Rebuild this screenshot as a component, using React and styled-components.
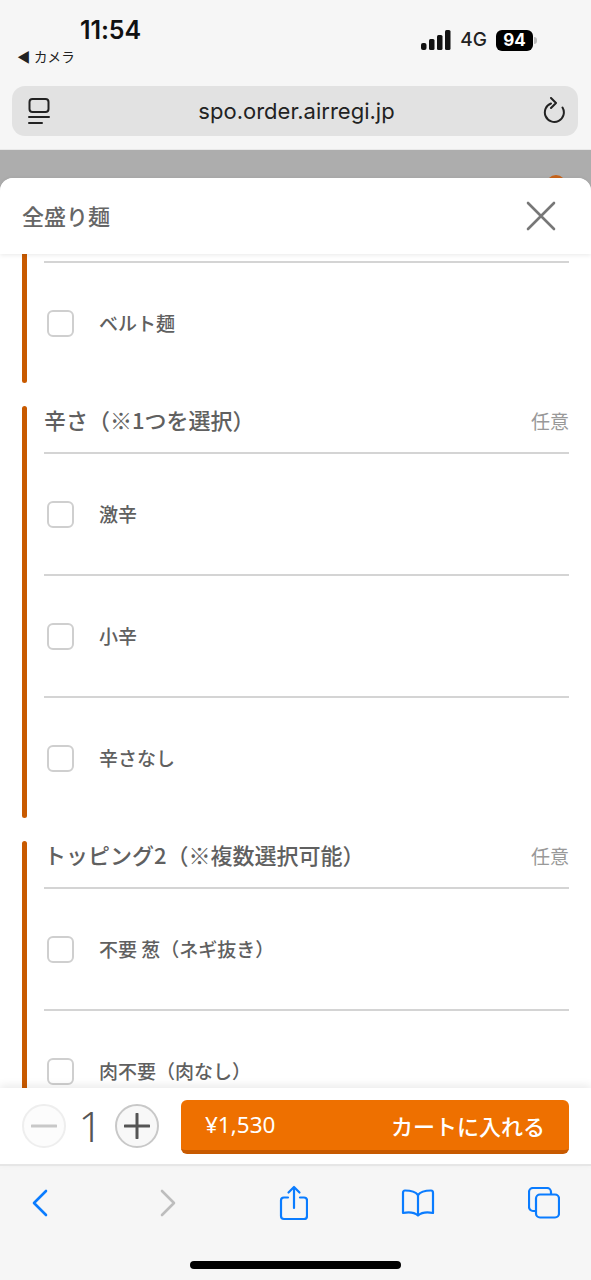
import React from "react";
import styled, { createGlobalStyle } from "styled-components";

const Global = createGlobalStyle`
  html, body { margin: 0; padding: 0; background: #f6f6f6; }
  * { box-sizing: border-box; }
  #root { width: 591px; height: 1280px; overflow: hidden; }
`;
const JP = `"Noto Sans CJK JP", "Noto Sans", sans-serif`;

const Page = styled.div`
  width: 591px; height: 1280px; display: flex; flex-direction: column;
  font-family: ${JP}; color: #555; overflow: hidden;
`;
const Chrome = styled.header`
  height: 150px; flex: none; background: #f6f6f6; border-bottom: 1px solid #e9e9e9;
  padding: 0 13px 0 12px; display: flex; flex-direction: column;
`;
const Status = styled.div`
  height: 86px; flex: none; display: flex; justify-content: space-between; align-items: flex-start;
`;
const StatusLeft = styled.div`
  display: flex; flex-direction: column; padding-left: 5px;
`;
const Time = styled.div`
  font: 600 25px/30px Inter, sans-serif; color: #111; margin: 15px 0 0 63px; letter-spacing: -0.1px;
`;
const Back = styled.div`
  font: 400 13.500px/20px ${JP}; color: #222; margin-top: 1px; letter-spacing: 0.2px;
`;
const StatusRight = styled.div`
  display: flex; align-items: center; margin: 29px 45px 0 0; height: 22px;
`;
const Net = styled.span`
  font: 500 19px/22px Inter, sans-serif; color: #222; margin: 0 9px;
`;
const Battery = styled.span`
  width: 37px; height: 21px; border-radius: 6px; background: #000; color: #fff;
  font: 700 17px/21px Inter, sans-serif; text-align: center; position: relative;
  &::after { content: ""; position: absolute; right: -4px; top: 7px; width: 3px; height: 7px;
    border-radius: 0 3px 3px 0; background: #bbb; }
`;
const Address = styled.div`
  height: 50px; background: #e2e2e2; border-radius: 13px; display: flex; align-items: center;
  justify-content: space-between; padding: 0 13px 0 16px;
`;
const Url = styled.div`
  font: 400 22px/28px Inter, sans-serif; color: #222;
`;
const Overlay = styled.div`
  flex: 1; min-height: 0; background: #adadad; padding-top: 28px; position: relative;
  display: flex; flex-direction: column;
`;
const Peek = styled.span`
  position: absolute; left: 546px; top: 25px; width: 20px; height: 20px; border-radius: 50%;
  background: #c8641a;
`;
const Modal = styled.main`
  flex: 1; min-height: 0; background: #fff; border-radius: 13px 13px 0 0; position: relative;
  display: flex; flex-direction: column;
`;
const ModalHead = styled.div`
  height: 76px; flex: none; display: flex; align-items: center; justify-content: space-between;
  padding: 0 35px 0 22px; background: #fff; border-radius: 13px 13px 0 0;
  box-shadow: 0 1px 5px rgba(0,0,0,.09); position: relative; z-index: 2;
`;
const ModalTitle = styled.h1`
  margin: 0 0 3px; font: 500 22px/28px ${JP}; color: #666;
`;
const Scroll = styled.div`
  flex: 1; min-height: 0; overflow: hidden; padding: 0 22px;
  display: flex; flex-direction: column; gap: 23px;
`;
const Section = styled.section`
  display: flex; gap: 17px; flex: none;
`;
const Bar = styled.div`
  width: 5px; flex: none; background: #c85a00; border-radius: ${p => (p.$open ? "0 0 3px 3px" : "3px")};
`;
const Content = styled.div`
  flex: 1; min-width: 0; padding-top: ${p => (p.$pad ? "7px" : "0")};
`;
const Heading = styled.div`
  height: 48px; display: flex; justify-content: space-between; align-items: flex-start;
  border-bottom: 2px solid #d4d4d4;
`;
const HeadingText = styled.h2`
  margin: 0; font: 500 22px/30px ${JP}; color: #606060; transform: translateY(-2px);
`;
const Optional = styled.span`
  font: 400 19px/30px ${JP}; color: #999;
`;
const Row = styled.div`
  height: ${p => (p.$line ? "122px" : "120px")}; display: flex; align-items: center; gap: 25px; padding-left: 3px;
  border-top: ${p => (p.$line ? "2px solid #d4d4d4" : "none")};
`;
const Check = styled.span`
  width: 27px; height: 27px; flex: none; border: 2px solid #cfcfcf; border-radius: 6px; background: #fff;
`;
const Label = styled.span`
  font: 500 19px/26px ${JP}; color: #606060;
`;
const Footer = styled.div`
  height: 78px; flex: none; background: #fff; border-bottom: 2px solid #e6e6e6; position: relative; z-index: 2;
  box-shadow: 0 -3px 8px rgba(0,0,0,.08); display: flex; align-items: center; padding: 0 22px;
`;
const Stepper = styled.div`
  display: flex; align-items: center; width: 159px; flex: none;
`;
const Round = styled.button`
  width: 44px; height: 44px; padding: 0; border-radius: 50%; flex: none; display: grid; place-items: center;
  border: 2px solid ${p => (p.$off ? "#eeeeee" : "#c8c8c8")};
  background: ${p => (p.$off ? "#fcfcfc" : "#f8f8f8")};
`;
const Qty = styled.span`
  width: 49px; text-align: center; font: 300 42px/44px "Noto Sans", sans-serif; color: #555;
`;
const Cart = styled.button`
  flex: 1; height: 54px; margin-top: 1px; background: #ee7000; border: none; border-bottom: 4px solid #c85a00;
  border-radius: 6px; display: flex; justify-content: space-between; align-items: center;
  padding: 0 24px; color: #fff; font: 500 22px/30px ${JP};
`;
const Price = styled.span`
  font: 400 22.500px/30px "Noto Sans", sans-serif;
`;
const Toolbar = styled.nav`
  height: 114px; flex: none; background: #f6f6f6; position: relative; display: flex; justify-content: space-between;
  align-items: flex-start; padding: 17px 30px 0 23px;
`;
const Tool = styled.span`
  width: 34px; height: 40px; display: grid; place-items: center;
`;
const Home = styled.div`
  position: absolute; left: 190px; bottom: 11px; width: 211px; height: 8px; border-radius: 4px; background: #000;
`;

const Signal = () => (
  <svg width="30" height="20" viewBox="0 0 30 20" fill="#111">
    <rect x="0" y="13" width="5.5" height="7" rx="2" /><rect x="8" y="9" width="5.5" height="11" rx="1.5" />
    <rect x="16" y="5" width="5.5" height="15" rx="1.5" /><rect x="24" y="0" width="5.5" height="20" rx="1.5" />
  </svg>
);
const Sidebar = () => (
  <svg width="22" height="28" viewBox="0 0 22 28" fill="none" stroke="#222" strokeWidth="2" strokeLinecap="round">
    <rect x="1.5" y="2" width="19" height="13" rx="3" /><path d="M1 20h20M1 26h13" />
  </svg>
);
const Reload = () => (
  <svg width="22" height="28" viewBox="0 0 22 28" fill="none" stroke="#222" strokeWidth="2" strokeLinecap="round" strokeLinejoin="round">
    <path d="M8 6.500a9.500 9.500 0 1 0 11.500 4" /><path d="M8 1l5 5-5 5" />
  </svg>
);
const Close = () => (
  <svg width="30" height="30" viewBox="0 0 30 30" stroke="#777" strokeWidth="2.6" strokeLinecap="round">
    <path d="M2 2l26 26M28 2L2 28" />
  </svg>
);
const Minus = () => (
  <svg width="26" height="26" viewBox="0 0 26 26" stroke="#c8c8c8" strokeWidth="3" strokeLinecap="round"><path d="M1 13h24" /></svg>
);
const Plus = () => (
  <svg width="26" height="26" viewBox="0 0 26 26" stroke="#555" strokeWidth="3" strokeLinecap="round"><path d="M1 13h24M13 1v24" /></svg>
);
const ChevronBack = () => (
  <svg width="16" height="28" viewBox="0 0 16 28" fill="none" stroke="#0a7cff" strokeWidth="2.6" strokeLinecap="round" strokeLinejoin="round">
    <path d="M14 2L2 14l12 12" />
  </svg>
);
const ChevronForward = () => (
  <svg width="20" height="28" viewBox="-4 0 20 28" fill="none" stroke="#bdbdbd" strokeWidth="2.6" strokeLinecap="round" strokeLinejoin="round">
    <path d="M2 2l12 12L2 26" />
  </svg>
);
const Share = () => (
  <svg width="32" height="36" viewBox="-4 0 32 36" fill="none" stroke="#0a7cff" strokeWidth="2.2" strokeLinecap="round" strokeLinejoin="round">
    <path d="M8 12.500H4a3 3 0 0 0-3 3V31a3 3 0 0 0 3 3h20a3 3 0 0 0 3-3V15.500a3 3 0 0 0-3-3h-4" />
    <path d="M14 23V2M8.500 7.500 14 2l5.500 5.500" />
  </svg>
);
const Book = () => (
  <svg width="34" height="28" viewBox="0 0 34 28" fill="none" stroke="#0a7cff" strokeWidth="2.2" strokeLinecap="round" strokeLinejoin="round">
    <path d="M17 6C14 2 9 1.500 4 1.500 2.500 1.500 2 2.500 2 4v20c5-1 11-1 15 2.500C21 23 27 23 32 24V4c0-1.500-.5-2.500-2-2.500-5 0-10 .5-13 4.500Z" />
    <path d="M17 6v20" />
  </svg>
);
const Tabs = () => (
  <svg width="32" height="32" viewBox="0 0 32 32" fill="none" stroke="#0a7cff" strokeWidth="2.2" strokeLinejoin="round">
    <rect x="8" y="7.500" width="23" height="23" rx="4" />
    <path d="M8 24H5a4 4 0 0 1-4-4V5a4 4 0 0 1 4-4h14a4 4 0 0 1 4 4v2.500" />
  </svg>
);

const Item = ({ line, children }) => (
  <Row $line={line}><Check /><Label>{children}</Label></Row>
);

export default function App() {
  return (
    <Page>
      <Global />
      <Chrome>
        <Status>
          <StatusLeft>
            <Time>11:54</Time>
            <Back>◀ カメラ</Back>
          </StatusLeft>
          <StatusRight>
            <Signal />
            <Net>4G</Net>
            <Battery>94</Battery>
          </StatusRight>
        </Status>
        <Address>
          <Sidebar />
          <Url>spo.order.airregi.jp</Url>
          <Reload />
        </Address>
      </Chrome>
      <Overlay>
        <Peek />
        <Modal>
          <ModalHead>
            <ModalTitle>全盛り麺</ModalTitle>
            <Close />
          </ModalHead>
          <Scroll>
            <Section>
              <Bar $open />
              <Content $pad>
                <Item line>ベルト麺</Item>
              </Content>
            </Section>
            <Section>
              <Bar />
              <Content>
                <Heading><HeadingText>辛さ（※1つを選択）</HeadingText><Optional>任意</Optional></Heading>
                <Item>激辛</Item>
                <Item line>小辛</Item>
                <Item line>辛さなし</Item>
              </Content>
            </Section>
            <Section>
              <Bar />
              <Content>
                <Heading><HeadingText>トッピング2（※複数選択可能）</HeadingText><Optional>任意</Optional></Heading>
                <Item>不要 葱（ネギ抜き）</Item>
                <Item line>肉不要（肉なし）</Item>
              </Content>
            </Section>
          </Scroll>
          <Footer>
            <Stepper>
              <Round $off aria-label="減らす"><Minus /></Round>
              <Qty>1</Qty>
              <Round aria-label="増やす"><Plus /></Round>
            </Stepper>
            <Cart><Price>¥1,530</Price><span>カートに入れる</span></Cart>
          </Footer>
          <Toolbar>
            <Tool><ChevronBack /></Tool>
            <Tool><ChevronForward /></Tool>
            <Tool><Share /></Tool>
            <Tool><Book /></Tool>
            <Tool><Tabs /></Tool>
            <Home />
          </Toolbar>
        </Modal>
      </Overlay>
    </Page>
  );
}
